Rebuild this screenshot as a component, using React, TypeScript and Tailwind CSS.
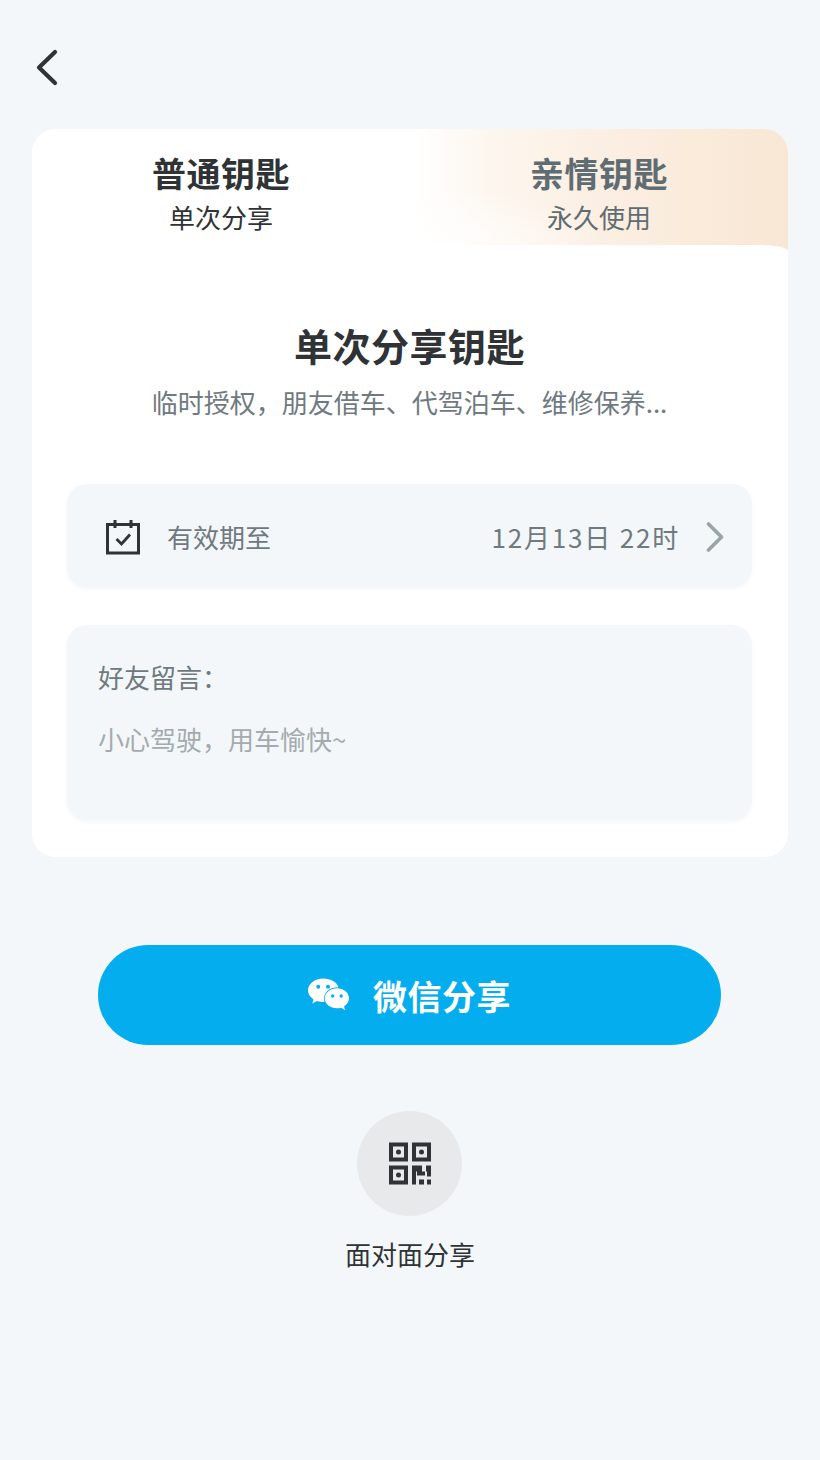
import React from 'react';

const fontStack = "font-['Noto_Sans_CJK_SC','Noto_Sans',sans-serif]";

const BackIcon: React.FC = () => (
  <svg width="22" height="37" viewBox="0 0 22 37" fill="none" stroke="#2f3335" strokeWidth="4.2" strokeLinecap="round" strokeLinejoin="round">
    <path d="M19 3L3 18.500l16 15.500" />
  </svg>
);

const RowArrow: React.FC = () => (
  <svg width="18" height="30" viewBox="0 0 18 30" fill="none" stroke="#9aa3a8" strokeWidth="3.6" strokeLinecap="round" strokeLinejoin="round">
    <path d="M2.500 2l13 13-13 13" />
  </svg>
);

const CalendarCheck: React.FC = () => (
  <svg width="36" height="36" viewBox="0 0 36 36" fill="none" stroke="#2f3335" strokeWidth="3">
    <rect x="2.500" y="5.500" width="31" height="28.500" />
    <path d="M10 1v8M26 1v8" />
    <path d="M11.500 20l5 5 8.500-9.500" strokeWidth="2.800" />
  </svg>
);

const WechatIcon: React.FC = () => (
  <svg width="41" height="34" viewBox="0 0 42 34">
    <path d="M15.500 0C7 0 0 5.400 0 12.200c0 3.900 2.300 7.100 5.700 9.300L4.400 25.700l4.800-2.600c2 .6 4.100 1 6.300 1 .5 0 1 0 1.500-.1-.4-1.200-.6-2.400-.6-3.600C16.400 13.800 22.600 9 30.300 9c.3 0 .6 0 .9 0C29.800 3.800 23.300 0 15.500 0z" fill="#fff" />
    <path d="M42 20.400c0-5.900-5.800-10.300-12.300-10.300-6.900 0-12.500 4.500-12.500 10.300 0 5.800 5.600 10.300 12.500 10.300 1.500 0 2.900-.3 4.300-.7l4 2.500-1.100-3.800C39.900 26.600 42 23.700 42 20.400z" fill="#fff" />
    <circle cx="10.500" cy="8.500" r="2" fill="#04aeee" />
    <circle cx="20.500" cy="8.500" r="2" fill="#04aeee" />
    <circle cx="25.300" cy="18" r="1.700" fill="#04aeee" />
    <circle cx="34" cy="18" r="1.700" fill="#04aeee" />
  </svg>
);

const QrIcon: React.FC = () => (
  <svg width="42" height="43" viewBox="0 0 42 42" fill="#2f3335">
    <path fillRule="evenodd" d="M0 0h19v19H0zM4 4v11h11V4z" />
    <rect x="7" y="7" width="5" height="5" rx="2.500" />
    <path fillRule="evenodd" d="M23 0h19v19H23zM27 4v11h11V4z" />
    <rect x="30" y="7" width="5" height="5" rx="2.500" />
    <path fillRule="evenodd" d="M0 23h19v19H0zM4 27v11h11V27z" />
    <rect x="7" y="30" width="5" height="5" rx="2.500" />
    <path d="M23 23h10v6h4v-6h5v11h-4v-5h-2v4h-8v-4h-1v13h-4z" />
    <rect x="30" y="37" width="5" height="5" />
    <rect x="38" y="37" width="4" height="5" />
  </svg>
);

export default function App() {
  return (
    <div className={`w-[820px] h-[1460px] overflow-hidden bg-[#f4f7f9] flex flex-col ${fontStack}`}>
      <div className="h-[129px] pl-[36px] pt-[49px] shrink-0">
        <BackIcon />
      </div>

      <div className="mx-[32px] w-[756px] h-[728px] rounded-[24px] bg-white overflow-hidden shrink-0 flex flex-col">
        <div className="h-[122px] shrink-0 flex">
          <div className="w-[378px] pt-[21px] flex flex-col items-center bg-white">
            <span className="text-[34px] leading-[46px] font-bold text-[#2f3335] tracking-[0.5px]">普通钥匙</span>
            <span className="text-[26px] leading-[36px] text-[#2f3335] mt-[3px]">单次分享</span>
          </div>
          <div className="w-[378px] pt-[21px] flex flex-col items-center bg-[radial-gradient(ellipse_at_0%_100%,#ffffff_0%,#ffffff00_38%),linear-gradient(90deg,#ffffff_0%,#fdf6ee_22%,#fbefe3_50%,#faead9_80%,#f9e7d5_100%)]">
            <span className="text-[34px] leading-[46px] font-bold text-[#5f6d72] tracking-[0.5px]">亲情钥匙</span>
            <span className="text-[26px] leading-[36px] text-[#5f6d72] mt-[3px]">永久使用</span>
          </div>
        </div>

        <div className="-mt-[6px] flex-1 bg-white rounded-tr-[28px_6px] pl-[35px] pr-[36px] flex flex-col">
          <div className="mt-[74px] text-center text-[38px] leading-[52px] font-bold text-[#2f3335] tracking-[0.5px]">单次分享钥匙</div>
          <div className="mt-[13px] text-center text-[26px] leading-[36px] text-[#6f7a80]">临时授权，朋友借车、代驾泊车、维修保养...</div>

          <div className="mt-[64px] h-[103px] rounded-[20px] bg-[#f4f7f9] shadow-[0_2px_4px_#0000000a] flex items-center pt-[2px] pl-[38px] pr-[28px]">
            <CalendarCheck />
            <span className="ml-[26px] text-[26px] text-[#6f7a80]">有效期至</span>
            <span className="ml-auto text-[26px] text-[#6f7a80] tracking-[1.800px]">12月13日 22时</span>
            <span className="ml-[26px]"><RowArrow /></span>
          </div>

          <div className="mt-[38px] h-[195px] rounded-[20px] bg-[#f4f7f9] shadow-[0_2px_4px_#0000000a] px-[31px] pt-[34px]">
            <div className="text-[26px] leading-[36px] text-[#6f7a80]">好友留言：</div>
            <div className="mt-[26px] text-[26px] leading-[36px] text-[#a4abaf]">小心驾驶，用车愉快~</div>
          </div>
        </div>
      </div>

      <div className="mt-[88px] ml-[98px] w-[623px] h-[100px] rounded-full bg-[#04aeee] flex items-center justify-center gap-[24px] shrink-0">
        <WechatIcon />
        <span className="text-[34px] font-bold text-white tracking-[0.5px]">微信分享</span>
      </div>

      <div className="mt-[66px] ml-[-1px] flex flex-col items-center">
        <div className="w-[105px] h-[105px] rounded-full bg-[#e8e9eb] flex items-center justify-center">
          <QrIcon />
        </div>
        <span className="mt-[20px] ml-[1px] text-[26px] leading-[36px] text-[#2f3335]">面对面分享</span>
      </div>
    </div>
  );
}
